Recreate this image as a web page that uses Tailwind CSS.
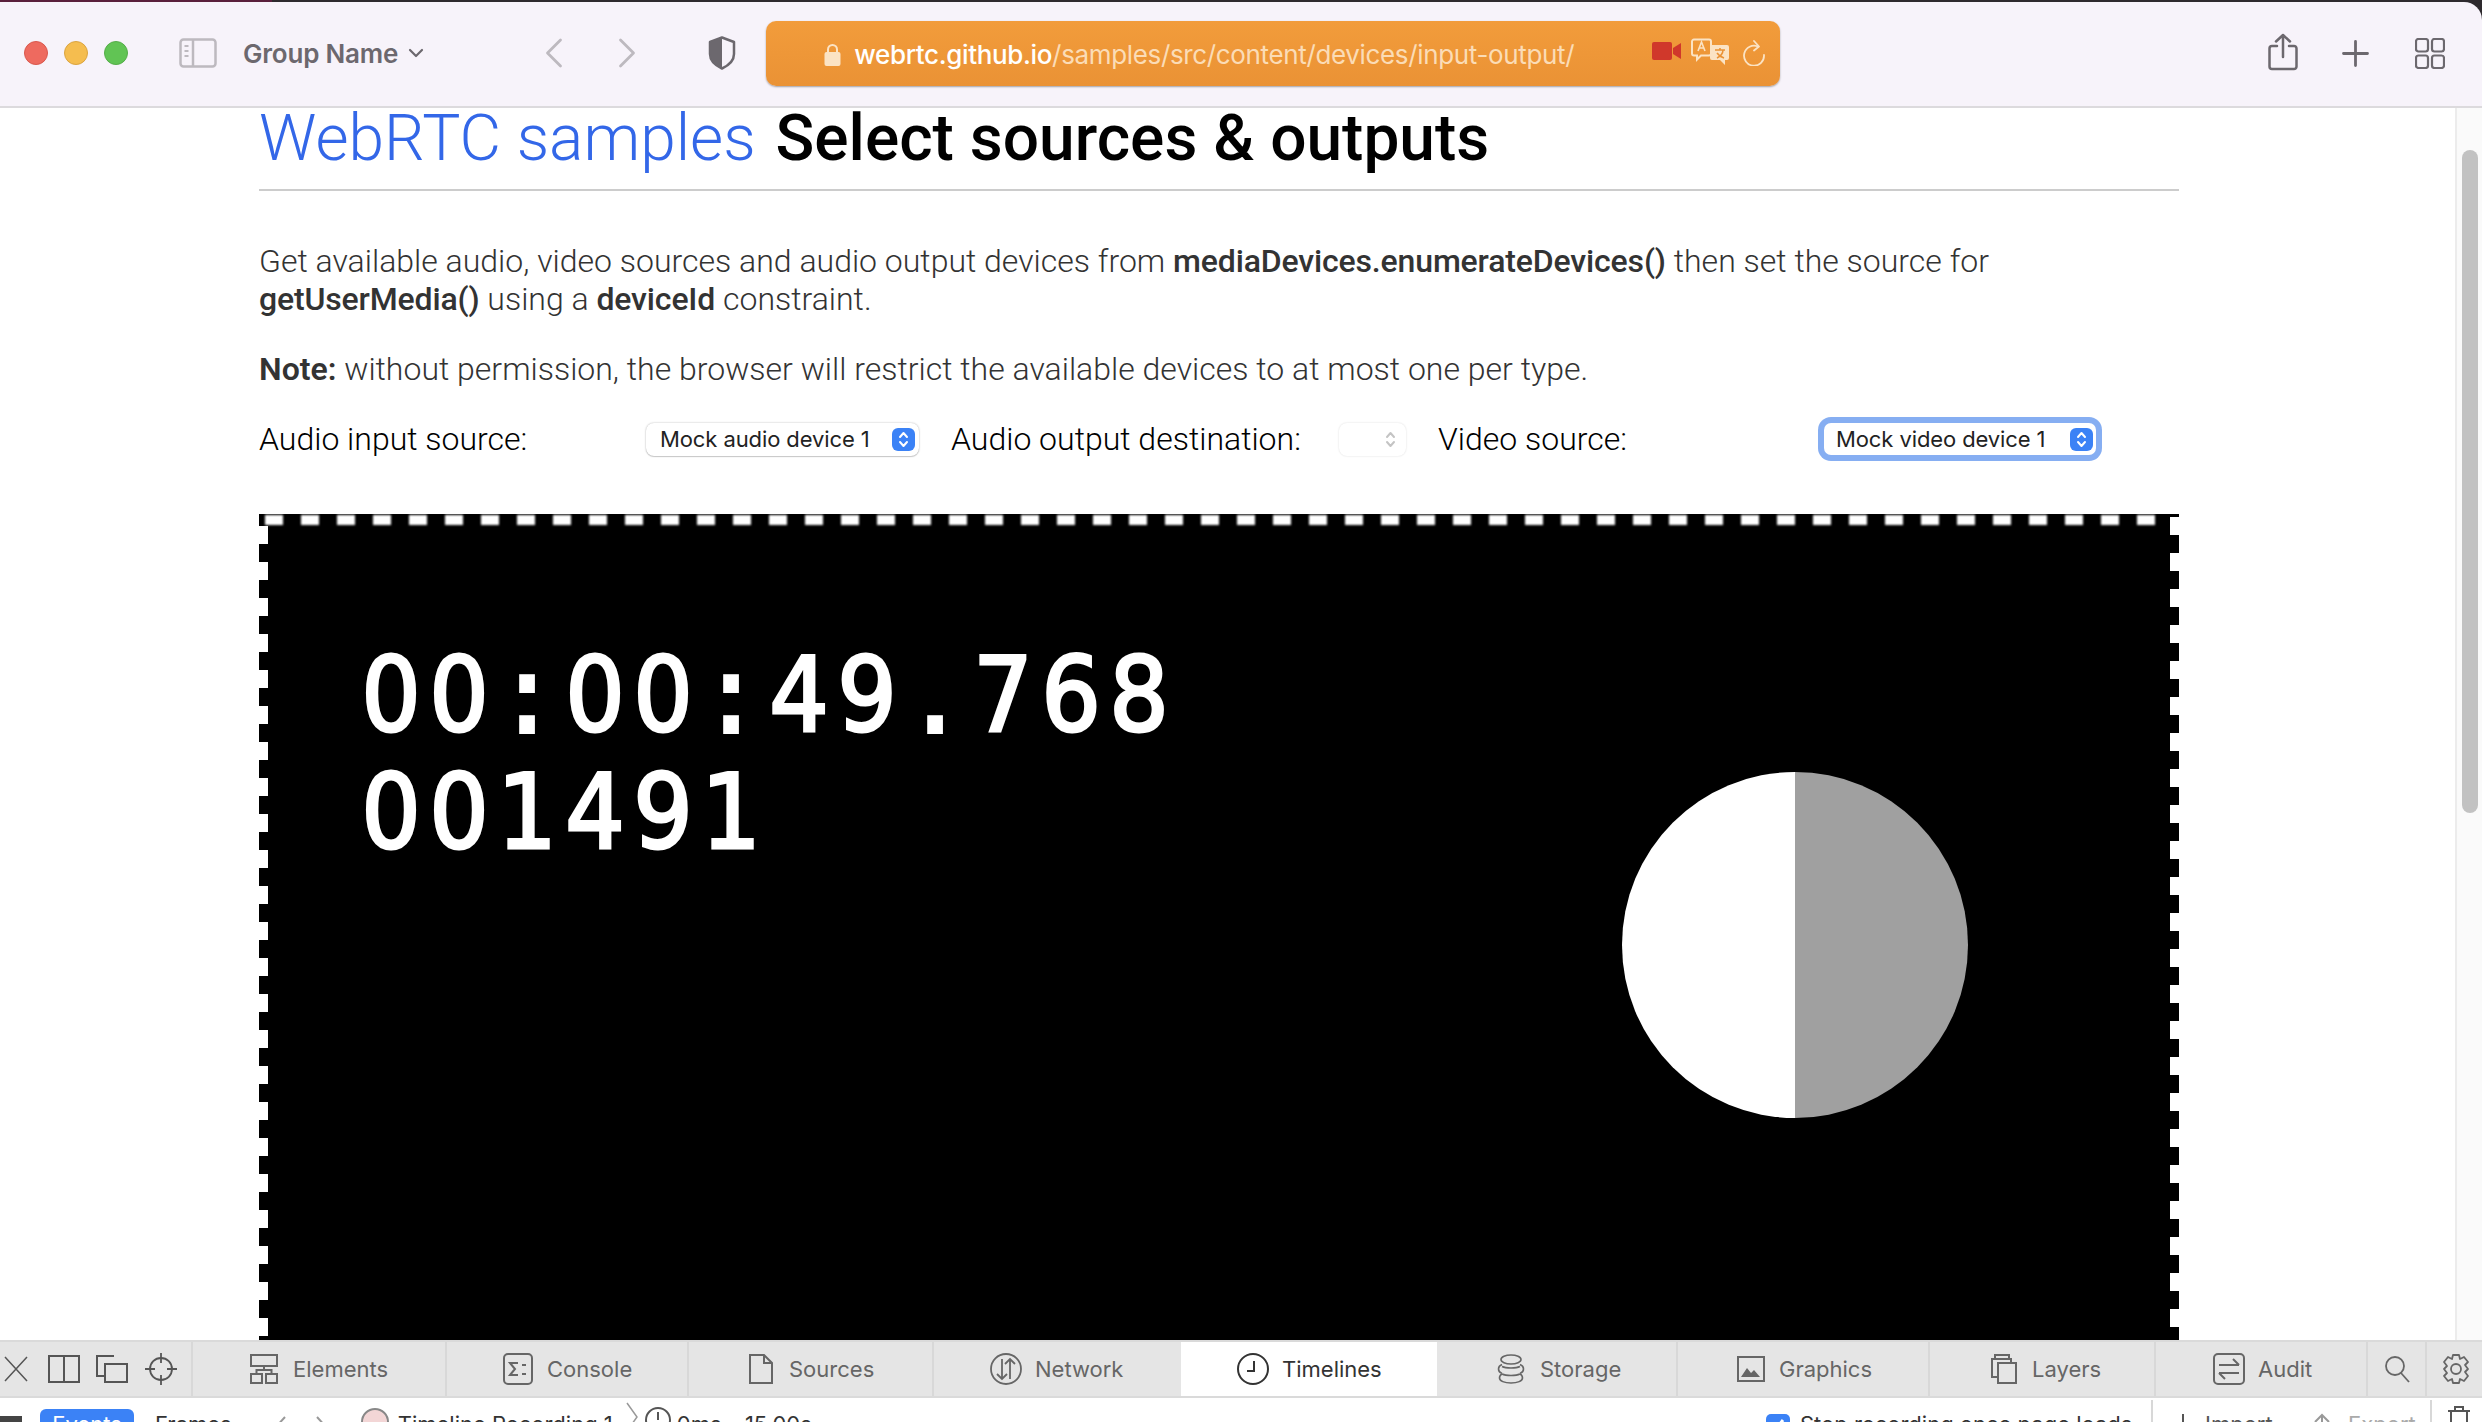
<!DOCTYPE html>
<html lang="en">
<head>
    <meta charset="UTF-8">
    <title>Select sources &amp; outputs</title>
    <script src="https://cdn.jsdelivr.net/npm/@tailwindcss/browser@4"></script>
</head>
<body class="bg-[#2e2a2e] overflow-hidden font-['Roboto',sans-serif]">
<div class="w-[2482px] h-[1422px] flex flex-col overflow-hidden">
    <!-- window top edge -->
    <div class="h-[2px] shrink-0 bg-[#2e2a2e] flex"><div class="w-[272px] bg-[#5a1f3c]"></div></div>

    <!-- safari toolbar -->
    <header class="h-[106px] shrink-0 bg-[#f7f3fa] border-b-2 border-[#dcdadd] rounded-tr-[18px] flex items-center text-[#6c686e]">
        <div class="flex items-center gap-[16px] ml-[24px] mb-[2px]">
            <span class="w-[24px] h-[24px] rounded-full bg-[#ee6a5f] border border-[#d9584d]"></span>
            <span class="w-[24px] h-[24px] rounded-full bg-[#f5bd4f] border border-[#dba440]"></span>
            <span class="w-[24px] h-[24px] rounded-full bg-[#61c454] border border-[#55ad49]"></span>
        </div>
        <svg class="ml-[51px] mb-[2px]" width="38" height="30" viewBox="0 0 38 30" fill="none" stroke="#bdb9bf" stroke-width="2.5"><rect x="1.5" y="1.5" width="35" height="27" rx="3"/><path d="M14 2v26"/><path d="M5.500 8h4M5.500 13h4M5.500 18h4" stroke-width="2"/></svg>
        <span class="ml-[26px] mb-[2px] text-[26px] font-semibold font-['Inter',sans-serif] tracking-[-0.2px] whitespace-nowrap">Group Name</span>
        <svg class="ml-[10px] mb-[2px]" width="16" height="10" viewBox="0 0 16 10" fill="none" stroke="#6c686e" stroke-width="2.200" stroke-linecap="round" stroke-linejoin="round"><path d="M2 2l6 6 6-6"/></svg>
        <svg class="ml-[121px] mb-[2px]" width="18" height="30" viewBox="0 0 18 30" fill="none" stroke="#bdb9bf" stroke-width="2.800" stroke-linecap="round" stroke-linejoin="round"><path d="M15.500 2L2.500 15l13 13"/></svg>
        <svg class="ml-[55px] mb-[2px]" width="18" height="30" viewBox="0 0 18 30" fill="none" stroke="#bdb9bf" stroke-width="2.800" stroke-linecap="round" stroke-linejoin="round"><path d="M2.500 2l13 13-13 13"/></svg>
        <svg class="ml-[72px] mb-[2px]" width="28" height="34" viewBox="0 0 28 34" fill="none"><path d="M14 1.500L2 6v12c0 7 5.500 11.500 12 14.500 6.500-3 12-7.500 12-14.500V6z" stroke="#6c686e" stroke-width="2.500" stroke-linejoin="round"/><path d="M14 1.500L2 6v12c0 7 5.500 11.500 12 14.500z" fill="#6c686e"/></svg>

        <!-- address bar -->
        <div class="ml-[30px] w-[1014px] h-[65px] mb-[2px] rounded-[10px] bg-gradient-to-b from-[#f29c3b] to-[#ea9235] shadow-[0_1px_2px_rgba(0,0,0,0.35)] flex items-center">
            <svg class="ml-[58px] mt-[3px]" width="17" height="23" viewBox="0 0 17 23"><path d="M4 10V6.500a4.500 4.500 0 0 1 9 0V10" fill="none" stroke="#fbe3c4" stroke-width="2"/><rect x="0.500" y="9" width="16" height="14" rx="2" fill="#fbe3c4"/></svg>
            <span class="ml-[13px] text-[26px] leading-none font-['Inter',sans-serif] tracking-[-0.35px] whitespace-nowrap mt-[4px]"><span class="text-white font-medium">webrtc.github.io</span><span class="text-[#fbdcb6]">/samples/src/content/devices/input-output/</span></span>
            <svg class="ml-auto mt-[-4px]" width="30" height="20" viewBox="0 0 30 20"><rect x="0" y="1" width="20" height="18" rx="2" fill="#d0382b"/><path d="M21 7l8-5v16l-8-5z" fill="#d0382b"/></svg>
            <svg class="ml-[9px] mt-[-2px]" width="39" height="28" viewBox="0 0 39 28" fill="none"><path d="M3 1.500h15a2 2 0 0 1 2 2v12a2 2 0 0 1-2 2H10l-4 4v-4H3a2 2 0 0 1-2-2v-12a2 2 0 0 1 2-2z" stroke="#fbe3c4" stroke-width="2"/><path d="M7 13l3.500-9L14 13M8 10h5" stroke="#fbe3c4" stroke-width="1.600"/><path d="M21 7h15a2 2 0 0 1 2 2v11a2 2 0 0 1-2 2h-2v5l-5-5h-8a2 2 0 0 1-2-2V9a2 2 0 0 1 2-2z" fill="#fbe3c4"/><path d="M24 12h10M29 10v2M26 20c4-2 6-5 6-8M26 15c2 3 4 4 7 5" stroke="#ea9235" stroke-width="1.500"/></svg>
            <svg class="ml-[12px] mr-[14px]" width="24" height="26" viewBox="0 0 24 26" fill="none" stroke="#fbe3c4" stroke-width="1.800" stroke-linecap="round" stroke-linejoin="round"><path d="M16 6.500A10 10 0 1 0 22 15"/><path d="M12 1l5 5.500-5 4"/></svg>
        </div>

        <svg class="ml-[488px] mb-[4px]" width="30" height="38" viewBox="0 0 30 38" fill="none" stroke="#6c686e" stroke-width="2.500" stroke-linecap="round" stroke-linejoin="round"><path d="M9 13H4a2.500 2.500 0 0 0-2.500 2.500v18A2.500 2.500 0 0 0 4 36h22a2.500 2.500 0 0 0 2.500-2.500v-18A2.500 2.500 0 0 0 26 13h-5"/><path d="M15 24V2M8 8.500L15 2l7 6.500"/></svg>
        <svg class="ml-[44px] mb-[2px]" width="27" height="27" viewBox="0 0 27 27" fill="none" stroke="#6c686e" stroke-width="2.800" stroke-linecap="round"><path d="M13.500 1.500v24M1.500 13.500h24"/></svg>
        <svg class="ml-[46px] mb-[2px]" width="30" height="31" viewBox="0 0 30 31" fill="none" stroke="#6c686e" stroke-width="2.200"><rect x="1" y="1" width="12" height="12.500" rx="2.500"/><rect x="17" y="1" width="12" height="12.500" rx="2.500"/><rect x="1" y="17.500" width="12" height="12.500" rx="2.500"/><rect x="17" y="17.500" width="12" height="12.500" rx="2.500"/></svg>
    </header>

    <!-- page + scrollbar -->
    <div class="flex-1 min-h-0 flex bg-white">
        <main class="flex-1 min-w-0 overflow-hidden pl-[259px]">
            <div class="w-[1920px]">
                <div class="h-[83px] pb-[20px] border-b-2 border-[#cccccc] flex items-center gap-[20px] text-[64px] leading-[61px] whitespace-nowrap">
                    <a class="font-light text-[#3367e8]">WebRTC samples</a>
                    <h1 class="font-medium text-black">Select sources &amp; outputs</h1>
                </div>
                <p class="mt-[51px] text-[32px] leading-[38px] font-light text-[#333333]">Get available audio, video sources and audio output devices from <b class="font-medium tracking-[-0.15px]">mediaDevices.enumerateDevices()</b> then set the source for <b class="font-medium tracking-[-0.15px]">getUserMedia()</b> using a <b class="font-medium tracking-[-0.15px]">deviceId</b> constraint.</p>
                <p class="mt-[32px] text-[32px] leading-[38px] font-light text-[#333333]"><b class="font-semibold">Note:</b> without permission, the browser will restrict the available devices to at most one per type.</p>

                <!-- selects -->
                <div class="mt-[28px] h-[46px] flex items-center text-[32px] font-light text-black whitespace-nowrap">
                    <label class="w-[387px]">Audio input source:</label>
                    <div class="w-[273px] h-[33px] rounded-[8px] bg-white shadow-[0_0_2px_rgba(0,0,0,0.3),0_1px_1px_rgba(0,0,0,0.15)] flex items-center justify-between pl-[14px] pr-[4px]">
                        <span class="text-[22px] font-normal text-[#222222] font-['Inter',sans-serif] tracking-[-0.1px]">Mock audio device 1</span>
                        <span class="w-[23px] h-[23px] rounded-[6px] bg-[#3b82f6] flex items-center justify-center">
                            <svg width="11" height="17" viewBox="0 0 11 17" fill="none" stroke="white" stroke-width="2" stroke-linecap="round" stroke-linejoin="round"><path d="M2 6l3.500-4L9 6M2 11l3.500 4L9 11"/></svg>
                        </span>
                    </div>
                    <label class="ml-[32px] w-[388px]">Audio output destination:</label>
                    <div class="w-[67px] h-[33px] rounded-[8px] bg-white shadow-[0_0_2px_rgba(0,0,0,0.15)] flex items-center justify-end pr-[10px]">
                        <svg width="11" height="17" viewBox="0 0 11 17" fill="none" stroke="#c4c4c4" stroke-width="2" stroke-linecap="round" stroke-linejoin="round"><path d="M2 6l3.500-4L9 6M2 11l3.500 4L9 11"/></svg>
                    </div>
                    <label class="ml-[32px] w-[386px]">Video source:</label>
                    <div class="w-[272px] h-[32px] rounded-[7px] bg-white ring-[6px] ring-[#86aef2] flex items-center justify-between pl-[12px] pr-[3px]">
                        <span class="text-[22px] font-normal text-[#222222] font-['Inter',sans-serif] tracking-[-0.1px]">Mock video device 1</span>
                        <span class="w-[23px] h-[23px] rounded-[6px] bg-[#3b82f6] flex items-center justify-center">
                            <svg width="11" height="17" viewBox="0 0 11 17" fill="none" stroke="white" stroke-width="2" stroke-linecap="round" stroke-linejoin="round"><path d="M2 6l3.500-4L9 6M2 11l3.500 4L9 11"/></svg>
                        </span>
                    </div>
                </div>

                <!-- video frame -->
                <div class="relative mt-[52px] w-[1920px] h-[900px] bg-black overflow-hidden">
                    <div class="absolute left-[6px] top-[1px] h-[10px] w-[1890px] bg-[repeating-linear-gradient(90deg,#ffffff_0,#ffffff_18px,#000000_18px,#000000_36px)] blur-[1px]"></div>
                    <div class="absolute left-0 top-[12px] w-[9px] h-[880px] bg-[repeating-linear-gradient(180deg,#ffffff_0,#ffffff_18px,#000000_18px,#000000_36px)] blur-[0.5px]"></div>
                    <div class="absolute right-0 top-[3px] w-[9px] h-[880px] bg-[repeating-linear-gradient(180deg,#ffffff_0,#ffffff_18px,#000000_18px,#000000_36px)] blur-[0.5px]"></div>
                    <div class="absolute left-[98px] top-[123px] text-white font-['DejaVu_Sans_Condensed','DejaVu_Sans',sans-serif] text-[104px] leading-[117px] [-webkit-text-stroke:3px_white] blur-[0.6px]">
                        <div class="grid grid-cols-[repeat(12,68px)] text-center">
                            <span>0</span><span>0</span><span class="[-webkit-text-stroke:6px_white]">:</span><span>0</span><span>0</span><span class="[-webkit-text-stroke:6px_white]">:</span><span>4</span><span>9</span><span class="[-webkit-text-stroke:6px_white]">.</span><span>7</span><span>6</span><span>8</span>
                        </div>
                        <div class="grid grid-cols-[repeat(6,68px)] text-center">
                            <span>0</span><span>0</span><span>1</span><span>4</span><span>9</span><span>1</span>
                        </div>
                    </div>
                    <div class="absolute left-[1363px] top-[258px] w-[346px] h-[346px] rounded-full bg-[linear-gradient(90deg,#ffffff_50%,#a0a0a0_50%)]"></div>
                </div>
            </div>
        </main>
        <div class="w-[27px] shrink-0 bg-[#fafafa] border-l-2 border-[#ececec] pl-[5px]">
            <div class="mt-[42px] w-[16px] h-[663px] rounded-full bg-[#c2c2c2]"></div>
        </div>
    </div>

    <!-- devtools tab bar -->
    <nav class="h-[58px] shrink-0 bg-[#e5e5e5] border-y-2 border-[#dadada] flex items-stretch text-[22px] text-[#666666] font-['Inter',sans-serif] z-10">
        <div class="w-[193px] flex items-center border-r-2 border-[#d8d8d8]">
            <svg class="ml-[3px]" width="26" height="28" viewBox="0 0 26 28" fill="none" stroke="#555555" stroke-width="1.500"><path d="M2 2l22 24M24 2L2 26"/></svg>
            <svg class="ml-[19px]" width="32" height="28" viewBox="0 0 32 28" fill="none" stroke="#555555" stroke-width="2"><rect x="1" y="1" width="30" height="26"/><path d="M16 1v26"/></svg>
            <svg class="ml-[16px]" width="32" height="28" viewBox="0 0 32 28" fill="none" stroke="#555555" stroke-width="2"><path d="M18 1H1v20h7"/><rect x="9" y="9" width="22" height="18"/></svg>
            <svg class="ml-[17px]" width="32" height="32" viewBox="0 0 32 32" fill="none" stroke="#555555" stroke-width="1.800"><circle cx="16" cy="16" r="11"/><path d="M16 0v10M16 22v10M0 16h10M22 16h10"/></svg>
        </div>
        <div class="w-[254px] flex items-center border-r-2 border-[#d8d8d8] pl-[57px]">
            <svg width="28" height="30" viewBox="0 0 28 30" fill="none" stroke="#666666" stroke-width="2"><rect x="1" y="1" width="26" height="11"/><rect x="1" y="20" width="11" height="9"/><rect x="16" y="20" width="11" height="9"/><path d="M6.500 20v-4h15v4M14 12v4"/></svg>
            <span class="ml-[15px]">Elements</span>
        </div>
        <div class="w-[242px] flex items-center border-r-2 border-[#d8d8d8] pl-[56px]">
            <svg width="30" height="32" viewBox="0 0 30 32" fill="none" stroke="#666666" stroke-width="2"><rect x="1" y="1" width="28" height="30" rx="4"/><path d="M15 10H7l5 6-5 6h8M19 12h4M19 21h4"/></svg>
            <span class="ml-[14px]">Console</span>
        </div>
        <div class="w-[245px] flex items-center border-r-2 border-[#d8d8d8] pl-[60px]">
            <svg width="24" height="30" viewBox="0 0 24 30" fill="none" stroke="#666666" stroke-width="2"><path d="M1 1h14l8 8v20H1zM15 1v8h8"/></svg>
            <span class="ml-[16px]">Sources</span>
        </div>
        <div class="w-[247px] flex items-center pl-[56px]">
            <svg width="32" height="32" viewBox="0 0 32 32" fill="none" stroke="#666666" stroke-width="1.800"><circle cx="16" cy="16" r="15"/><path d="M12 6v20M7 21l5 5 5-5M20 26V6M15 11l5-5 5 5"/></svg>
            <span class="ml-[13px]">Network</span>
        </div>
        <div class="w-[256px] flex items-center bg-white text-[#333333] pl-[56px]">
            <svg width="32" height="32" viewBox="0 0 32 32" fill="none" stroke="#333333" stroke-width="2"><circle cx="16" cy="16" r="15"/><path d="M17 8v10h-7"/></svg>
            <span class="ml-[13px]">Timelines</span>
        </div>
        <div class="w-[241px] flex items-center border-r-2 border-[#d8d8d8] pl-[60px]">
            <svg width="28" height="30" viewBox="0 0 28 30" fill="none" stroke="#666666" stroke-width="1.600"><ellipse cx="14" cy="5.500" rx="10" ry="4.500"/><path d="M5 10.500C2.500 11.500 1.500 13 1.500 15s1 3.500 3.500 4.500M23 10.500c2.500 1 3.500 2.500 3.500 4.500s-1 3.500-3.500 4.500M5 12.500c4 2 14 2 18 0M5 20c4 2 14 2 18 0M5 20C3 21 2.500 22.500 2.500 24c0 3 5 5 11.500 5s11.500-2 11.500-5c0-1.500-.5-3-2.500-4"/></svg>
            <span class="ml-[15px]">Storage</span>
        </div>
        <div class="w-[252px] flex items-center border-r-2 border-[#d8d8d8] pl-[59px]">
            <svg width="28" height="26" viewBox="0 0 28 26"><rect x="1" y="1" width="26" height="24" fill="none" stroke="#666666" stroke-width="2"/><path d="M4 21l6-9 4 5 3-3 6 7z" fill="#666666"/></svg>
            <span class="ml-[14px]">Graphics</span>
        </div>
        <div class="w-[226px] flex items-center border-r-2 border-[#d8d8d8] pl-[59px]">
            <svg width="28" height="30" viewBox="0 0 28 30" fill="none" stroke="#666666" stroke-width="2"><path d="M6 5V1h14v4M3 9V5h19v4"/><rect x="9" y="9" width="18" height="20"/><path d="M3 5v18h6M6 1v4"/></svg>
            <span class="ml-[15px]">Layers</span>
        </div>
        <div class="w-[212px] flex items-center border-r-2 border-[#d8d8d8] pl-[57px]">
            <svg width="32" height="32" viewBox="0 0 32 32" fill="none" stroke="#666666" stroke-width="2"><rect x="1" y="1" width="30" height="30" rx="4"/><path d="M6 12h20M20 6l6 6M26 20H6M12 26l-6-6"/></svg>
            <span class="ml-[13px]">Audit</span>
        </div>
        <div class="w-[59px] flex items-center justify-center border-r-2 border-[#d8d8d8]">
            <svg width="26" height="28" viewBox="0 0 26 28" fill="none" stroke="#666666" stroke-width="1.800"><circle cx="11" cy="11" r="9"/><path d="M17 18l8 9"/></svg>
        </div>
        <div class="flex-1 flex items-center pl-[14px]">
            <svg width="30" height="32" viewBox="0 0 30 32" fill="none" stroke="#666666" stroke-width="1.800"><circle cx="15" cy="16" r="5"/><path d="M12 2h6l1 4 4-2 4 5-3 3 3 4-3 3 3 4-4 5-4-2-1 4h-6l-1-4-4 2-4-5 3-3-3-4 3-3-3-4 4-5 4 2z" stroke-linejoin="round"/></svg>
        </div>
    </nav>

    <!-- clipped timeline toolbar -->
    <div class="h-[24px] shrink-0 bg-white overflow-hidden relative text-[22px] text-[#333333] font-['Inter',sans-serif] flex items-start whitespace-nowrap">
        <span class="mt-[18px] w-[22px] h-[10px] bg-[#444444]"></span>
        <span class="ml-[18px] mt-[11px] w-[94px] h-[30px] rounded-t-[6px] bg-[#3b82f6] text-white text-center leading-[30px]">Events</span>
        <span class="ml-[21px] mt-[11px] leading-[30px]">Frames</span>
        <svg class="ml-[41px] mt-[18px]" width="14" height="24" viewBox="0 0 14 24" fill="none" stroke="#999999" stroke-width="2"><path d="M12 1L2 12l10 11"/></svg>
        <svg class="ml-[28px] mt-[18px]" width="14" height="24" viewBox="0 0 14 24" fill="none" stroke="#999999" stroke-width="2"><path d="M2 1l10 11-10 11"/></svg>
        <svg class="ml-[31px] mt-[9px]" width="30" height="30" viewBox="0 0 30 30"><circle cx="15" cy="15" r="13" fill="#f3d6d6" stroke="#888888" stroke-width="2"/></svg>
        <span class="ml-[8px] mt-[11px] leading-[30px]">Timeline Recording 1</span>
        <svg class="ml-[12px] mt-[4px]" width="14" height="30" viewBox="0 0 14 30" fill="none" stroke="#999999" stroke-width="1.500"><path d="M2 1l10 14L2 29"/></svg>
        <svg class="ml-[6px] mt-[9px]" width="26" height="26" viewBox="0 0 26 26" fill="none" stroke="#555555" stroke-width="2"><circle cx="13" cy="13" r="12"/><path d="M13 5v8"/></svg>
        <span class="ml-[6px] mt-[11px] leading-[30px]">0ms – 15.00s</span>
        <span class="absolute left-[1766px] top-[16px] w-[24px] h-[24px] rounded-[5px] bg-[#3b82f6] flex justify-center">
            <svg class="mt-[3px]" width="16" height="16" viewBox="0 0 16 16" fill="none" stroke="white" stroke-width="3"><path d="M3 8l3 4 7-9"/></svg>
        </span>
        <span class="absolute left-[1800px] top-[11px] leading-[30px]">Stop recording once page loads</span>
        <span class="absolute left-[2151px] top-[2px] w-[2px] h-[30px] bg-[#d8d8d8]"></span>
        <svg class="absolute left-[2175px] top-[16px]" width="16" height="20" viewBox="0 0 16 20" fill="none" stroke="#555555" stroke-width="2"><path d="M8 0v16M2 10l6 6 6-6"/></svg>
        <span class="absolute left-[2205px] top-[11px] leading-[30px] text-[#555555]">Import</span>
        <svg class="absolute left-[2313px] top-[15px]" width="18" height="20" viewBox="0 0 18 20" fill="none" stroke="#999999" stroke-width="2"><path d="M9 20V2M2 9l7-7 7 7"/></svg>
        <span class="absolute left-[2348px] top-[11px] leading-[30px] text-[#aaaaaa]">Export</span>
        <span class="absolute left-[2430px] top-[2px] w-[2px] h-[30px] bg-[#d8d8d8]"></span>
        <svg class="absolute left-[2447px] top-[8px]" width="24" height="28" viewBox="0 0 24 28" fill="none" stroke="#555555" stroke-width="2"><path d="M8 5V1h8v4M1 5h22M4 5v22h16V5"/></svg>
    </div>
</div>
</body>
</html>
